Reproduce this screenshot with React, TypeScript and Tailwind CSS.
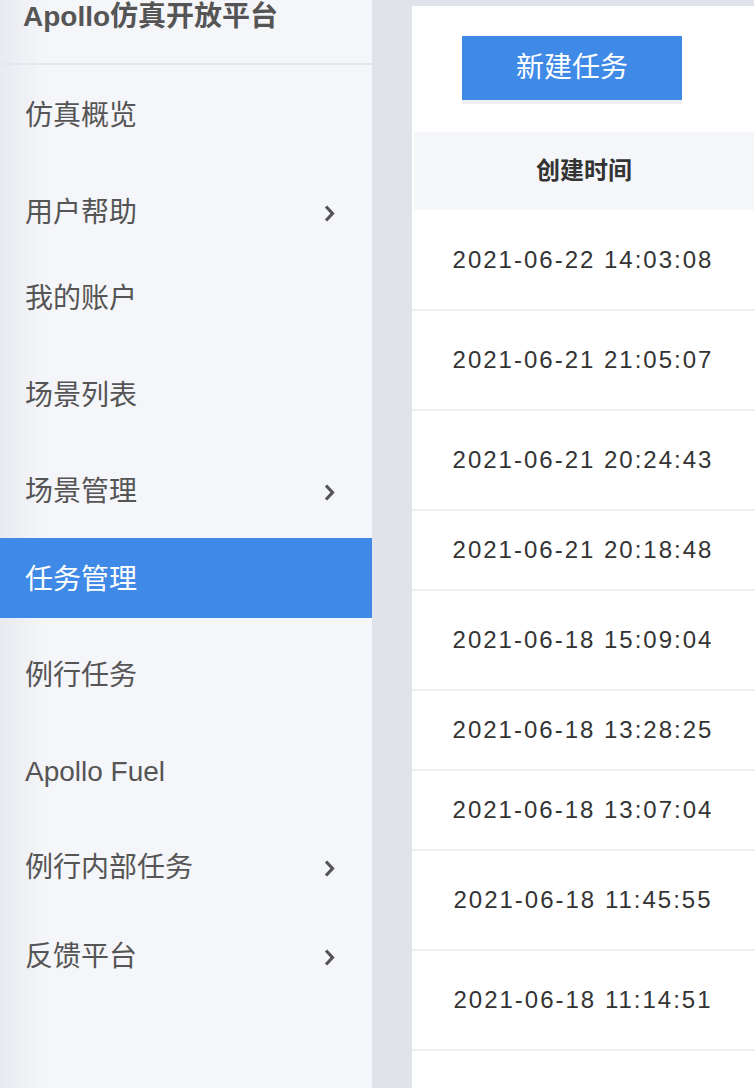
const MENU = [
  { label: '仿真概览', mt: 'mt-[9px]' },
  { label: '用户帮助', mt: 'mt-[17px]', sub: true },
  { label: '我的账户', mt: 'mt-[6px]' },
  { label: '场景列表', mt: 'mt-[17px]' },
  { label: '场景管理', mt: 'mt-[16px]', sub: true },
  { label: '任务管理', mt: 'mt-[8px]', active: true },
  { label: '例行任务', mt: 'mt-[16px]' },
  { label: 'Apollo Fuel', mt: 'mt-[16px]' },
  { label: '例行内部任务', mt: 'mt-[16px]', sub: true },
  { label: '反馈平台', mt: 'mt-[9px]', sub: true },
]

const ROWS = [
  { t: '2021-06-22 14:03:08', h: 'h-[101px]' },
  { t: '2021-06-21 21:05:07', h: 'h-[100px]' },
  { t: '2021-06-21 20:24:43', h: 'h-[100px]' },
  { t: '2021-06-21 20:18:48', h: 'h-[80px]' },
  { t: '2021-06-18 15:09:04', h: 'h-[100px]' },
  { t: '2021-06-18 13:28:25', h: 'h-[80px]' },
  { t: '2021-06-18 13:07:04', h: 'h-[80px]' },
  { t: '2021-06-18 11:45:55', h: 'h-[100px]' },
  { t: '2021-06-18 11:14:51', h: 'h-[100px]' },
  { t: '', h: 'h-[100px]' },
]

const FONT = "font-['Liberation_Sans','Noto_Sans_CJK_SC',sans-serif]"

function Chevron() {
  return (
    <svg width="13" height="19" viewBox="0 0 13 19" className="shrink-0">
      <polyline points="3,2.5 9.5,9.5 3,16.5" fill="none" stroke="#555" strokeWidth="3.2" />
    </svg>
  )
}

export default function App() {
  return (
    <div className={`flex h-[1088px] w-[754px] overflow-hidden bg-[#e1e3ea] ${FONT}`}>
      <aside className="flex h-full w-[372px] shrink-0 flex-col bg-gradient-to-r from-[#e9eaef] via-[#f5f6fa] via-[12%] to-[#f5f6fa]">
        <div className="h-[65px] shrink-0 border-b-2 border-[#e6e7ec] pl-[23px]">
          <span className="block text-[28px] font-bold leading-[34px] text-[#555]">Apollo仿真开放平台</span>
        </div>
        <nav className="flex flex-col">
          {MENU.map((m) => (
            <div
              key={m.label}
              className={`flex h-[80px] shrink-0 items-center justify-between pl-[25px] pr-[36px] pt-[4px] text-[28px] ${m.mt} ${
                m.active ? 'bg-[#3f8ae6] text-white' : 'text-[#555]'
              }`}
            >
              <span>{m.label}</span>
              {m.sub && <Chevron />}
            </div>
          ))}
        </nav>
      </aside>

      <main className="ml-[40px] mt-[6px] flex flex-1 flex-col bg-white">
        <div className="h-[126px] shrink-0 pl-[50px] pt-[30px]">
          <button className="h-[64px] w-[220px] bg-[#3f8ae6] text-[28px] text-white shadow-[0_4px_0_#eef0f4]">
            新建任务
          </button>
        </div>
        <div className="ml-[2px] flex h-[78px] shrink-0 items-center justify-center bg-[#f5f6fa] text-[24px] font-bold text-[#333]">
          创建时间
        </div>
        {ROWS.map((r, i) => (
          <div
            key={i}
            className={`flex shrink-0 items-center justify-center border-b-2 border-[#eceef3] text-[24px] tracking-[2px] text-[#333] ${r.h}`}
          >
            {r.t}
          </div>
        ))}
      </main>
    </div>
  )
}
